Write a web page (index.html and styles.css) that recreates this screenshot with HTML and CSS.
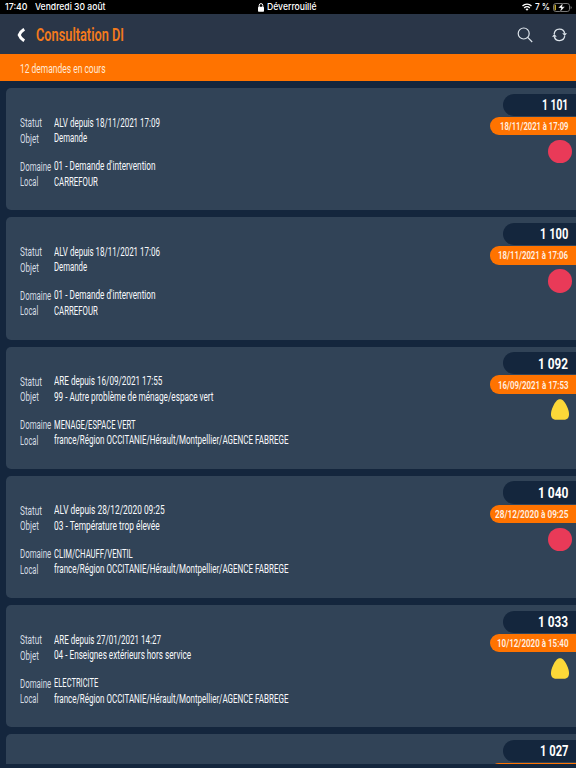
FILE: index.html
```html
<!DOCTYPE html>
<html lang="fr">
<head>
<meta charset="utf-8">
<title>Consultation DI</title>
<link rel="stylesheet" href="styles.css">
</head>
<body>
<div class="status">
  <div class="status-left"><span data-w="22.5">17:40</span><span data-w="70.5">Vendredi 30 août</span></div>
  <div class="status-mid">
    <svg width="6" height="9" viewBox="0 0 6 9"><path d="M1.2 4V2.4a1.8 1.8 0 0 1 3.6 0V4" fill="none" stroke="#fff" stroke-width="1"/><rect y="3.8" width="6" height="5" rx=".8" fill="#fff"/></svg>
    <span data-w="49.5">Déverrouillé</span>
  </div>
  <div class="status-right">
    <svg width="10" height="8" viewBox="0 0 10 8"><g fill="none" stroke="#fff" stroke-width="1.4"><path d="M.5 3a6.4 6.4 0 0 1 9 0"/><path d="M2.2 4.9a4 4 0 0 1 5.6 0"/></g><path d="M3.5 6.2a2.1 2.1 0 0 1 3 0L5 7.8z" fill="#fff"/></svg>
    <span data-w="15">7 %</span>
    <svg width="19" height="9" viewBox="0 0 19 9"><rect x=".5" y=".5" width="16" height="8" rx="2.3" fill="none" stroke="#777"/><path d="M2.2 1.8v5.4" stroke="#f5d33a" stroke-width="1.2"/><path d="M17.6 3v3q1.1-.5 1.1-1.5T17.6 3z" fill="#777"/><path d="M10 0 5.3 5h2.8L7 9l4.8-5.2H9z" fill="#fff" stroke="#000" stroke-width=".3"/></svg>
  </div>
</div>
<header class="header">
  <svg class="back" width="9" height="14" viewBox="0 0 9 14"><path d="M7.2 1.2Q3.3 3.7 2.2 7q1.1 3.300 5 5.800" fill="none" stroke="#fff" stroke-width="3"/></svg>
  <h1><span data-w="88">Consultation DI</span></h1>
  <svg class="search" width="16" height="16" viewBox="0 0 16 16"><g fill="none" stroke="#dce3ea" stroke-width="1.2"><circle cx="6.700" cy="6.500" r="5.500"/><path d="m10.700 10.400 4.500 4.600"/></g></svg>
  <svg class="sync" width="15" height="14" viewBox="0 0 15 14"><g fill="none" stroke="#dce3ea" stroke-width="1.300"><path d="M2.200 6A5.300 5.300 0 0 1 12.700 5.500"/><path d="M12.700 8.200A5.300 5.300 0 0 1 2.300 8.500"/></g><path d="M10.200 5.200H15L12.700 8zM0 8.800h4.800L2.300 6z" fill="#dce3ea"/></svg>
</header>
<div class="count"><span data-w="85.5">12 demandes en cours</span></div>
<main class="list">
  <article class="card">
    <dl class="info">
      <dt><span data-w="22">Statut</span></dt><dd><span data-w="106">ALV depuis 18/11/2021 17:09</span></dd>
      <dt><span data-w="19">Objet</span></dt><dd><span data-w="33">Demande</span></dd>
      <dt><span data-w="31.3">Domaine</span></dt><dd><span data-w="101.5">01 - Demande d'intervention</span></dd>
      <dt><span data-w="18.3">Local</span></dt><dd><span data-w="43.8">CARREFOUR</span></dd>
    </dl>
    <div class="side"><div class="num"><span data-w="26.3">1 101</span></div><div class="date"><span data-w="68.5">18/11/2021 à 17:09</span></div><div class="dot"></div></div>
  </article>
  <article class="card">
    <dl class="info">
      <dt><span data-w="22">Statut</span></dt><dd><span data-w="106">ALV depuis 18/11/2021 17:06</span></dd>
      <dt><span data-w="19">Objet</span></dt><dd><span data-w="33">Demande</span></dd>
      <dt><span data-w="31.3">Domaine</span></dt><dd><span data-w="101.5">01 - Demande d'intervention</span></dd>
      <dt><span data-w="18.3">Local</span></dt><dd><span data-w="43.8">CARREFOUR</span></dd>
    </dl>
    <div class="side"><div class="num"><span data-w="28.3">1 100</span></div><div class="date"><span data-w="70">18/11/2021 à 17:06</span></div><div class="dot"></div></div>
  </article>
  <article class="card">
    <dl class="info">
      <dt><span data-w="22">Statut</span></dt><dd><span data-w="108.3">ARE depuis 16/09/2021 17:55</span></dd>
      <dt><span data-w="19">Objet</span></dt><dd><span data-w="159.5">99 - Autre problème de ménage/espace vert</span></dd>
      <dt><span data-w="31.3">Domaine</span></dt><dd><span data-w="81.5">MENAGE/ESPACE VERT</span></dd>
      <dt><span data-w="18.3">Local</span></dt><dd><span data-w="234.5">france/Région OCCITANIE/Hérault/Montpellier/AGENCE FABREGE</span></dd>
    </dl>
    <div class="side"><div class="num"><span data-w="30">1 092</span></div><div class="date"><span data-w="70.5">16/09/2021 à 17:53</span></div><svg class="drop" width="18" height="21" viewBox="0 0 18 21"><path d="M9 .3C11.300.3 13 1.800 15.500 6.500 17.500 10.300 18 13 18 15.500 18 19.200 16 20.700 12.500 20.700h-7C2 20.700 0 19.200 0 15.500 0 13 .5 10.300 2.500 6.500 5 1.800 6.700.3 9 .3z" fill="#fcd838"/></svg></div>
  </article>
  <article class="card">
    <dl class="info">
      <dt><span data-w="22">Statut</span></dt><dd><span data-w="110.7">ALV depuis 28/12/2020 09:25</span></dd>
      <dt><span data-w="19">Objet</span></dt><dd><span data-w="105.7">03 - Température trop élevée</span></dd>
      <dt><span data-w="31.3">Domaine</span></dt><dd><span data-w="78.7">CLIM/CHAUFF/VENTIL</span></dd>
      <dt><span data-w="18.3">Local</span></dt><dd><span data-w="234.5">france/Région OCCITANIE/Hérault/Montpellier/AGENCE FABREGE</span></dd>
    </dl>
    <div class="side"><div class="num"><span data-w="30.5">1 040</span></div><div class="date"><span data-w="73.5">28/12/2020 à 09:25</span></div><div class="dot"></div></div>
  </article>
  <article class="card">
    <dl class="info">
      <dt><span data-w="22">Statut</span></dt><dd><span data-w="107">ARE depuis 27/01/2021 14:27</span></dd>
      <dt><span data-w="19">Objet</span></dt><dd><span data-w="137">04 - Enseignes extérieurs hors service</span></dd>
      <dt><span data-w="31.3">Domaine</span></dt><dd><span data-w="44.3">ELECTRICITE</span></dd>
      <dt><span data-w="18.3">Local</span></dt><dd><span data-w="234.5">france/Région OCCITANIE/Hérault/Montpellier/AGENCE FABREGE</span></dd>
    </dl>
    <div class="side"><div class="num"><span data-w="30">1 033</span></div><div class="date"><span data-w="71.5">10/12/2020 à 15:40</span></div><svg class="drop" width="18" height="21" viewBox="0 0 18 21"><path d="M9 .3C11.300.3 13 1.800 15.500 6.500 17.500 10.300 18 13 18 15.500 18 19.200 16 20.700 12.500 20.700h-7C2 20.700 0 19.200 0 15.500 0 13 .5 10.300 2.500 6.500 5 1.800 6.700.3 9 .3z" fill="#fcd838"/></svg></div>
  </article>
  <article class="card">
    <div class="side"><div class="num"><span data-w="28.5">1 027</span></div><div class="date"></div></div>
  </article>
</main>
<script src="fit.js"></script>
</body>
</html>
```
FILE: styles.css
```css
* { box-sizing: border-box; }
body {
  margin: 0;
  width: 576px;
  height: 768px;
  overflow: hidden;
  display: flex;
  flex-direction: column;
  background: #14263d;
  color: #fff;
  font-family: Roboto, "Liberation Sans", sans-serif;
}
svg { display: block; flex: none; }
[data-w] { display: inline-block; flex: none; white-space: nowrap; transform-origin: 0 50%; }

.status {
  flex: none;
  display: grid;
  grid-template-columns: 1fr auto 1fr;
  align-items: center;
  height: 14px;
  padding: 0 4px 0 5px;
  background: #000;
  font: 500 9.5px/14px Inter, sans-serif;
}
.status-left, .status-mid, .status-right { display: flex; align-items: center; }
.status-left { gap: 7.5px; }
.status-mid { gap: 3px; margin-right: 3px; }
.status-right { gap: 3px; justify-content: flex-end; }

.header {
  flex: none;
  display: flex;
  align-items: center;
  height: 40px;
  padding: 1px 9px 0 16.7px;
  background: #2a3648;
}
h1 {
  flex: 1;
  margin: 0 0 0 10.3px;
  color: #f47a1c;
  font-size: 17.5px;
  font-weight: 600;
  line-height: 24px;
}
.sync { margin-left: 19.3px; }

.count {
  flex: none;
  height: 27px;
  padding: 1px 0 0 19.5px;
  background: #ff7300;
  color: #ffe9d6;
  font-size: 13px;
  font-weight: 400;
  line-height: 27px;
}

.list {
  display: flex;
  flex-direction: column;
  gap: 7px;
  height: 683px;
  padding: 7px 0 0 6px;
  overflow: hidden;
}
.card {
  flex: none;
  display: flex;
  justify-content: space-between;
  height: 122.25px;
  border-radius: 5px 0 0 5px;
  background: #314357;
}
.info {
  display: grid;
  grid-template-columns: 34.5px 1fr;
  grid-template-rows: 15.4px 28px 15.6px 15.6px;
  margin: 0;
  padding: 27.7px 0 0 13.5px;
  font-size: 12px;
  line-height: 15.5px;
}
dt { padding-top: .5px; color: #d5dce3; font-weight: 400; }
dd { margin: 0; color: #f8fafc; font-weight: 430; }

.side {
  display: flex;
  flex-direction: column;
  align-items: flex-end;
  margin-left: auto;
  padding-top: 5.5px;
}
.num, .date { display: flex; justify-content: flex-end; align-items: center; padding-right: 8px; }
.num {
  width: 73.5px;
  height: 22.3px;
  padding-top: 1px;
  border-radius: 11px 0 0 11px;
  background: #14263d;
  font-size: 15.5px;
  font-weight: 700;
}
.date {
  width: 86px;
  height: 18.3px;
  margin-top: 1.2px;
  padding-top: 1px;
  border-radius: 9px 0 0 9px;
  background: #ff7300;
  color: #fff1e4;
  font-size: 10px;
  font-weight: 600;
}
.dot {
  width: 23.5px;
  height: 23.5px;
  margin: 4.5px 4.5px 0 0;
  border-radius: 50%;
  background: #e93a58;
}
.drop { margin: 5.3px 7.3px 0 0; }
```
FILE: fit.js
```js
// Condense each label horizontally so it occupies its declared width.
document.querySelectorAll("[data-w]").forEach(function (el) {
  var target = parseFloat(el.dataset.w);
  var natural = el.getBoundingClientRect().width;
  el.style.transform = "scaleX(" + target / natural + ")";
  el.style.marginRight = target - natural + "px";
});
```
